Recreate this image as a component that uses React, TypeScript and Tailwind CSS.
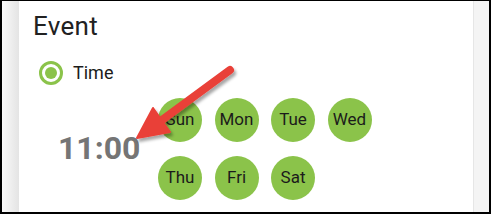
import React from 'react';

const days = ['Sun', 'Mon', 'Tue', 'Wed', 'Thu', 'Fri', 'Sat'];

function DayChip({ label }: { label: string }) {
	return (
		<div className="flex h-[44px] w-[44px] items-center justify-center rounded-full bg-[#8bc34a] text-[17px] text-[#1b1b1b]">
			{label}
		</div>
	);
}

// red callout arrow pointing at the time
function Arrow() {
	return (
		<svg className="pointer-events-none absolute left-0 top-0" width="491" height="214" viewBox="0 0 491 214">
			<defs>
				<filter id="shadow" x="-20%" y="-20%" width="140%" height="140%">
					<feDropShadow dx="2" dy="3" stdDeviation="1.5" floodColor="#000" floodOpacity="0.35" />
				</filter>
			</defs>
			<g filter="url(#shadow)">
				<line x1="228" y1="69" x2="160" y2="119" stroke="#e94038" strokeWidth="8" strokeLinecap="round" />
				<polygon points="135,137 151,107 168,131" fill="#e94038" strokeLinejoin="round" stroke="#e94038" strokeWidth="2" />
			</g>
		</svg>
	);
}

function App() {
	return (
		<div
			className="relative flex h-[214px] w-[491px] overflow-hidden border-b-2 border-l-2 border-r-2 border-t border-black bg-white"
			style={{ fontFamily: 'Roboto, "Liberation Sans", sans-serif' }}
		>
			<div className="w-[17px] bg-gradient-to-r from-[#fafafa] to-[#e4e4e4]" />
			<div className="flex flex-1 flex-col bg-white pl-[14px] pt-[9px]">
				<h1 className="text-[26px] leading-[32px] tracking-[0.3px] text-[#212121]">Event</h1>
				<div className="mt-[17px] flex items-center gap-[10px] pl-[6px]">
					<div className="flex h-[24px] w-[24px] items-center justify-center rounded-full border-[3px] border-[#8bc34a]">
						<div className="h-[12px] w-[12px] rounded-full bg-[#8bc34a]" />
					</div>
					<span className="text-[18px] text-[#1b1b1b]">Time</span>
				</div>
				<div className="mt-[12px] flex items-center">
					<div className="w-[125px] pl-[25px]">
						<span className="text-[32px] font-bold leading-none text-[#757575]">11:00</span>
					</div>
					<div className="grid grid-cols-[repeat(4,44px)] gap-x-[12.5px] gap-y-[14px]">
						{days.map(d => (
							<DayChip key={d} label={d} />
						))}
					</div>
				</div>
			</div>
			<div className="w-[16px] border-l border-[#e6e6e6] bg-[#f4f4f4]" />
			<Arrow />
		</div>
	);
}

export default App;
